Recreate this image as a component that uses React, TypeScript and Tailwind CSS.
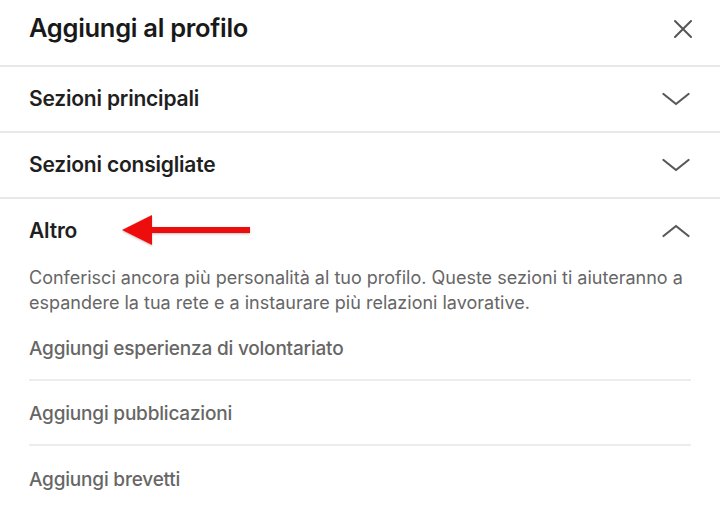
import { useState } from "react";

const font = { fontFamily: "Inter, 'Noto Sans', sans-serif" };

function Chevron({ up }: { up?: boolean }) {
  return (
    <svg width="28" height="14" viewBox="0 0 28 14" fill="none" className="shrink-0">
      <path
        d={up ? "M1.5 12 L14 2 L26.5 12" : "M1.5 2 L14 12 L26.5 2"}
        stroke="#595959"
        strokeWidth="2.2"
        strokeLinecap="round"
        strokeLinejoin="round"
      />
    </svg>
  );
}

function Section({ title, open, onToggle }: { title: string; open: boolean; onToggle: () => void }) {
  return (
    <button
      onClick={onToggle}
      className="flex w-full items-center justify-between h-[64px] pl-[29px] pr-[30px] text-left"
    >
      <span className="text-[21px] font-semibold text-[#1f1f1f] tracking-[-0.2px]">{title}</span>
      <Chevron up={open} />
    </button>
  );
}

const items = [
  "Aggiungi esperienza di volontariato",
  "Aggiungi pubblicazioni",
  "Aggiungi brevetti",
];

export default function App() {
  const [open, setOpen] = useState<string>("Altro");
  const toggle = (name: string) => setOpen(open === name ? "" : name);

  return (
    <div className="w-[720px] h-[506px] bg-white overflow-hidden" style={font}>
      <div className="flex items-center justify-between h-[65px] pl-[29px] pr-[27px] pb-[8px]">
        <h1 className="text-[25.5px] font-semibold text-[#191919] tracking-[-0.3px]">Aggiungi al profilo</h1>
        <svg width="20" height="20" viewBox="0 0 20 20" fill="none">
          <path d="M2 2 L18 18 M18 2 L2 18" stroke="#555" strokeWidth="2" strokeLinecap="round" />
        </svg>
      </div>
      <div className="h-[2px] bg-[#e8e8e8]" />

      <Section title="Sezioni principali" open={open === "principali"} onToggle={() => toggle("principali")} />
      <div className="h-[2px] bg-[#e8e8e8]" />
      <Section title="Sezioni consigliate" open={open === "consigliate"} onToggle={() => toggle("consigliate")} />
      <div className="h-[2px] bg-[#e8e8e8]" />

      <div className="relative">
        <Section title="Altro" open={open === "Altro"} onToggle={() => toggle("Altro")} />
        {/* red annotation arrow */}
        <svg
          className="absolute left-[120px] top-[14px] pointer-events-none"
          width="134"
          height="34"
          viewBox="0 0 134 34"
        >
          <defs>
            <filter id="sh" x="-10%" y="-30%" width="120%" height="160%">
              <feDropShadow dx="0" dy="1" stdDeviation="1" floodColor="#000" floodOpacity="0.25" />
            </filter>
          </defs>
          <g filter="url(#sh)">
            <rect x="30" y="14" width="100" height="6" fill="#ee1111" />
            <path d="M2 17 L32 2 L32 32 Z" fill="#ee1111" />
          </g>
        </svg>
      </div>

      {open === "Altro" && (
        <div className="px-[29px]">
          <p className="text-[18px] leading-[25px] text-[#666] mt-[2px]">
            Conferisci ancora più personalità al tuo profilo. Queste sezioni ti aiuteranno a espandere la tua rete e a
            instaurare più relazioni lavorative.
          </p>
          <ul className="mt-[1px]">
            {items.map((item, i) => (
              <li
                key={item}
                className={`flex items-center h-[65px] pt-[4px] text-[19px] font-medium text-[#666] tracking-[-0.2px] ${
                  i < items.length - 1 ? "border-b-2 border-[#ececec]" : ""
                }`}
              >
                {item}
              </li>
            ))}
          </ul>
        </div>
      )}
    </div>
  );
}
